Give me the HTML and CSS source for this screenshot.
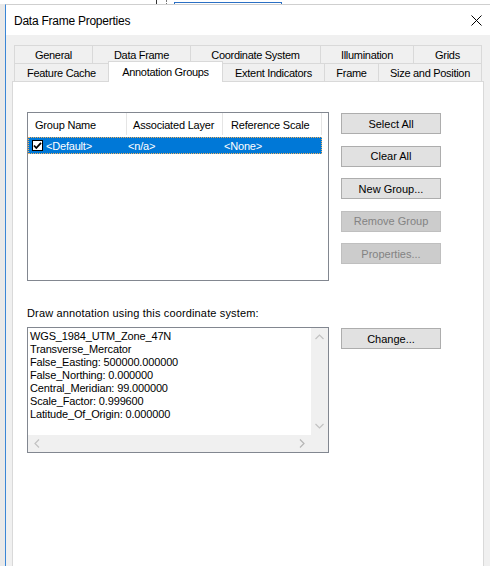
FILE: index.html
```html
<!DOCTYPE html>
<html>
<head>
<meta charset="utf-8">
<link rel="stylesheet" href="styles.css">
</head>
<body>
<div class="bgwin">
  <span class="gap156"></span><span class="vline"></span><span class="gap9"></span><span class="dotline"></span><span class="gap7"></span><span class="bluebox"></span>
</div>
<div class="dialog">
  <div class="titlebar">
    <span class="title">Data Frame Properties</span>
    <svg class="close" width="11" height="11" viewBox="0 0 11 11"><path d="M0.5 0.5 L10.5 10.5 M10.5 0.5 L0.5 10.5" stroke="#000" stroke-width="1" fill="none"/></svg>
  </div>
  <div class="body">
    <div class="tabs">
      <div class="tabrow">
        <div class="tab w78">General</div>
        <div class="tab w98">Data Frame</div>
        <div class="tab w130">Coordinate System</div>
        <div class="tab w93">Illumination</div>
        <div class="tab w69 last">Grids</div>
      </div>
      <div class="tabrow">
        <div class="tab w94">Feature Cache</div>
        <div class="tab w115 sel">Annotation Groups</div>
        <div class="tab w101 noleft">Extent Indicators</div>
        <div class="tab w54">Frame</div>
        <div class="tab w104 last">Size and Position</div>
      </div>
    </div>
    <div class="panel">
      <div class="section">
        <div class="listview">
          <div class="lvhead">
            <div class="hc c1">Group Name</div>
            <div class="hc c2">Associated Layer</div>
            <div class="hc c3">Reference Scale</div>
          </div>
          <div class="lvrow">
            <div class="rc c1">
              <svg class="chk" width="11" height="11" viewBox="0 0 11 11"><rect x="0.5" y="0.5" width="10" height="10" fill="#fff" stroke="#000"/><path d="M2 5.5 L4.3 8 L9 2.8" stroke="#000" stroke-width="1.8" fill="none"/></svg>
              <span>&lt;Default&gt;</span>
            </div>
            <div class="rc c2">&lt;n/a&gt;</div>
            <div class="rc c3">&lt;None&gt;</div>
          </div>
        </div>
        <div class="btncol">
          <div class="btn">Select All</div>
          <div class="btn">Clear All</div>
          <div class="btn">New Group...</div>
          <div class="btn dis">Remove Group</div>
          <div class="btn dis">Properties...</div>
        </div>
      </div>
      <div class="label">Draw annotation using this coordinate system:</div>
      <div class="section">
        <div class="textbox">
          <div class="tbtext">
            <div>WGS_1984_UTM_Zone_47N</div>
            <div>Transverse_Mercator</div>
            <div>False_Easting: 500000.000000</div>
            <div>False_Northing: 0.000000</div>
            <div>Central_Meridian: 99.000000</div>
            <div>Scale_Factor: 0.999600</div>
            <div>Latitude_Of_Origin: 0.000000</div>
          </div>
          <div class="vscroll">
            <svg width="9" height="6" viewBox="0 0 9 6"><path d="M0.5 5 L4.5 1 L8.5 5" stroke="#c2c2c2" stroke-width="1.2" fill="none"/></svg>
            <svg width="9" height="6" viewBox="0 0 9 6"><path d="M0.5 1 L4.5 5 L8.5 1" stroke="#c2c2c2" stroke-width="1.2" fill="none"/></svg>
          </div>
          <div class="hscroll">
            <svg width="6" height="9" viewBox="0 0 6 9"><path d="M5 0.5 L1 4.5 L5 8.5" stroke="#c2c2c2" stroke-width="1.2" fill="none"/></svg>
            <svg width="6" height="9" viewBox="0 0 6 9"><path d="M1 0.5 L5 4.5 L1 8.5" stroke="#b5b5b5" stroke-width="1.2" fill="none"/></svg>
          </div>
          <div class="corner"></div>
        </div>
        <div class="btncol">
          <div class="btn chg">Change...</div>
        </div>
      </div>
    </div>
  </div>
</div>
</body>
</html>
```
FILE: styles.css
```css
* { box-sizing: border-box; }
html, body { margin: 0; padding: 0; }
body {
  width: 490px;
  height: 566px;
  overflow: hidden;
  background: #e9e9e9;
  font-family: "Liberation Sans", Arial, sans-serif;
  font-size: 11px;
  color: #000;
}
.bgwin {
  height: 4px;
  background: #fff;
  display: flex;
}
.gap156 { width: 156px; }
.gap9 { width: 9px; }
.gap7 { width: 7px; }
.vline { width: 1px; background: #333; }
.dotline { width: 1px; border-left: 1px dotted #777; }
.bluebox { width: 108px; margin-top: 2px; border: 1px solid #2a6fc4; border-bottom: none; }

.dialog {
  margin-left: 5px;
  border-left: 1px solid #3a86d6;
  border-top: 1px solid #cfcfcf;
  height: 562px;
  background: #f0f0f0;
}
.titlebar {
  height: 30px;
  background: #fff;
  display: flex;
  align-items: center;
  justify-content: space-between;
  padding: 0 8px 0 8px;
}
.title {
  font-size: 12px;
  letter-spacing: -0.25px;
  padding-top: 1px;
}
.close { margin-top: 1px; }

.body { padding: 10px 6px 0 6px; }
.tabs { padding: 0 2px; position: relative; z-index: 2; }
.tabrow { display: flex; height: 18px; }
.tab {
  height: 18px;
  border-top: 1px solid #d9d9d9;
  border-left: 1px solid #d9d9d9;
  display: flex;
  align-items: center;
  justify-content: center;
  background: #f0f0f0;
  white-space: nowrap;
  padding-top: 1px;
  letter-spacing: -0.3px;
}
.tab.last { border-right: 1px solid #d9d9d9; }
.tab.noleft { border-left: none; }
.tab.sel {
  height: 21px;
  margin-top: -2px;
  background: #fff;
  border-right: 1px solid #d9d9d9;
  padding-top: 0;
  padding-bottom: 1px;
}
.w78 { width: 78px; }
.w98 { width: 98px; }
.w130 { width: 130px; }
.w93 { width: 93px; }
.w69 { width: 69px; }
.w94 { width: 94px; }
.w115 { width: 115px; }
.w101 { width: 101px; }
.w54 { width: 54px; }
.w104 { width: 104px; }

.panel {
  background: #fff;
  border: 1px solid #d9d9d9;
  height: 500px;
  padding: 30px 14px 0 14px;
}
.section { display: flex; gap: 12px; align-items: flex-start; }
.listview {
  width: 302px;
  height: 169px;
  border: 1px solid #828790;
  background: #fff;
  letter-spacing: -0.2px;
}
.lvhead { display: flex; height: 22px; }
.hc {
  border-right: 1px solid #e5e5e5;
  display: flex;
  align-items: center;
  white-space: nowrap;
  padding-top: 2px;
}
.c1 { width: 99px; }
.c2 { width: 96px; }
.c3 { width: 99px; }
.hc.c1 { padding-left: 7px; }
.hc.c2 { padding-left: 6px; }
.hc.c3 { padding-left: 8px; }
.lvrow {
  display: flex;
  margin-top: 2px;
  height: 17px;
  width: 294px;
  background: #0078d7;
  color: #fff;
  outline: 1px dotted #f0b060;
  outline-offset: -1px;
}
.rc { display: flex; align-items: center; white-space: nowrap; }
.rc.c1 { padding-left: 4px; gap: 3px; }
.rc.c2 { padding-left: 1px; }
.rc.c3 { padding-left: 1px; }
.chk { display: block; }

.btncol { display: flex; flex-direction: column; gap: 11.5px; padding-top: 1px; }
.btn {
  width: 100px;
  height: 21px;
  background: #e1e1e1;
  border: 1px solid #adadad;
  display: flex;
  align-items: center;
  justify-content: center;
  white-space: nowrap;
}
.btn.dis { background: #cccccc; border-color: #bfbfbf; color: #838383; }

.label {
  margin-top: 25px;
  height: 14px;
  line-height: 14px;
  margin-bottom: 7px;
  white-space: nowrap;
  letter-spacing: 0.15px;
}
.textbox {
  width: 302px;
  height: 126px;
  border: 1px solid #828790;
  display: grid;
  grid-template-columns: 1fr 17px;
  grid-template-rows: 1fr 17px;
  background: #fff;
}
.tbtext { padding: 2px 0 0 2px; line-height: 13px; white-space: nowrap; overflow: hidden; letter-spacing: -0.15px; }
.vscroll {
  background: #f0f0f0;
  display: flex;
  flex-direction: column;
  justify-content: space-between;
  align-items: center;
  padding: 6px 0 6px 0;
}
.hscroll {
  background: #f0f0f0;
  display: flex;
  justify-content: space-between;
  align-items: center;
  padding: 0 6px;
}
.corner { background: #f0f0f0; }
.vscroll svg, .hscroll svg { display: block; }
.btn.chg { margin-top: 0; }
```
